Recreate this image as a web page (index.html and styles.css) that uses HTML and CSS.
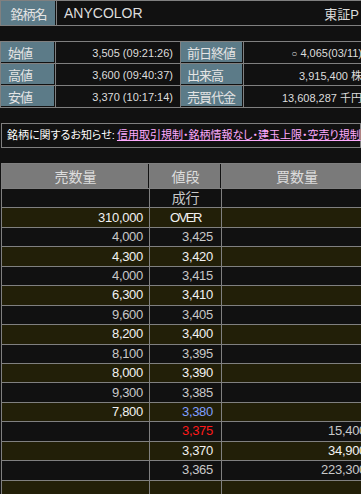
FILE: index.html
```html
<!DOCTYPE html>
<html lang="ja">
<head>
    <meta charset="UTF-8">
    <meta name="viewport" content="width=device-width, initial-scale=1.0">
    <title>ANYCOLOR 板情報</title>
    <link rel="stylesheet" href="styles.css">
</head>
<body>
    <!-- 銘柄名 -->
    <table class="name-box">
        <tr>
            <th>銘柄名</th>
            <td class="name">ANYCOLOR</td>
            <td class="market">東証P</td>
        </tr>
    </table>

    <!-- 四本値 -->
    <table class="info">
        <tr>
            <th class="label-l">始値</th>
            <td class="value-l">3,505 (09:21:26)</td>
            <th class="label-r">前日終値</th>
            <td class="value-r"><span class="mark">○</span> 4,065(03/11)</td>
        </tr>
        <tr>
            <th class="label-l">高値</th>
            <td class="value-l">3,600 (09:40:37)</td>
            <th class="label-r">出来高</th>
            <td class="value-r">3,915,400 株</td>
        </tr>
        <tr>
            <th class="label-l">安値</th>
            <td class="value-l">3,370 (10:17:14)</td>
            <th class="label-r">売買代金</th>
            <td class="value-r">13,608,287 千円</td>
        </tr>
    </table>

    <!-- お知らせ -->
    <div class="notice">銘柄に関するお知らせ:<a href="#">信用取引規制・銘柄情報なし・建玉上限・空売り規制</a></div>

    <!-- 板 -->
    <table class="board">
        <thead>
            <tr>
                <th class="col-sell">売数量</th>
                <th class="col-price">値段</th>
                <th class="col-buy">買数量</th>
            </tr>
        </thead>
        <tbody>
            <tr><td></td><td class="center">成行</td><td></td></tr>
            <tr class="alt"><td>310,000</td><td class="center over">OVER</td><td></td></tr>
            <tr><td>4,000</td><td>3,425</td><td></td></tr>
            <tr class="alt"><td>4,300</td><td>3,420</td><td></td></tr>
            <tr><td>4,000</td><td>3,415</td><td></td></tr>
            <tr class="alt"><td>6,300</td><td>3,410</td><td></td></tr>
            <tr><td>9,600</td><td>3,405</td><td></td></tr>
            <tr class="alt"><td>8,200</td><td>3,400</td><td></td></tr>
            <tr><td>8,100</td><td>3,395</td><td></td></tr>
            <tr class="alt"><td>8,000</td><td>3,390</td><td></td></tr>
            <tr><td>9,300</td><td>3,385</td><td></td></tr>
            <tr class="alt"><td>7,800</td><td class="best-ask">3,380</td><td></td></tr>
            <tr><td></td><td class="best-bid">3,375</td><td>15,400</td></tr>
            <tr class="alt"><td></td><td>3,370</td><td>34,900</td></tr>
            <tr><td></td><td>3,365</td><td>223,300</td></tr>
            <tr class="alt"><td></td><td></td><td></td></tr>
            <tr><td></td><td></td><td></td></tr>
        </tbody>
    </table>
</body>
</html>
```

FILE: styles.css
```css
html {
    overflow: hidden;
}

body {
    margin: 0;
    background: #111;
    color: #ddd;
    font-family: "Liberation Sans", "Noto Sans CJK JP", sans-serif;
}

table {
    border-collapse: collapse;
}

/* 銘柄名 */
.name-box {
    width: 372px;
    border: 1px solid #808080;
}

.name-box th {
    width: 55px;
    height: 24px;
    padding: 0;
    background: #5c7b88;
    color: #e4e4e4;
    font-size: 13px;
    font-weight: normal;
    letter-spacing: -1px;
    border-right: 1px solid #808080;
    box-shadow: inset -1px 0 0 #111;
}

.name-box .name {
    padding: 0 0 0 7px;
    font-size: 14px;
    color: #ddd;
}

.name-box .market {
    padding: 0 12px 0 0;
    text-align: right;
    font-size: 13px;
    color: #ddd;
}

/* 四本値 */
.info {
    margin-top: 15px;
    width: 373px;
    table-layout: fixed;
}

.info th,
.info td {
    height: 21px;
    padding: 0;
    border: 1px solid #808080;
    font-weight: normal;
}

.info th {
    background: #5c7b88;
    color: #e4e4e4;
    font-size: 13px;
    letter-spacing: -1px;
    text-align: left;
    padding-left: 7px;
    box-shadow: inset -1px -1px 0 #111;
}

.info .label-l {
    width: 47px;
}

.info .value-l {
    width: 117px;
}

.info .label-r {
    width: 56px;
    padding-left: 6px;
}

.info td {
    text-align: right;
    padding-right: 7px;
    font-size: 11px;
    color: #ddd;
}

.info td.value-r {
    padding-right: 10px;
}

.info .mark {
    font-size: 10px;
}

/* お知らせ */
.notice {
    box-sizing: border-box;
    width: 360px;
    height: 25px;
    margin: 15px 1px 0;
    padding: 0 0 0 5px;
    border: 1px solid #808080;
    font-size: 11px;
    line-height: 23px;
    color: #fff;
    white-space: nowrap;
    font-feature-settings: "palt";
}

.notice a {
    color: #ffaaff;
    margin-left: 2px;
}

/* 板 */
.board {
    margin: 15px 0 0 1px;
    width: 372px;
    table-layout: fixed;
}

.board th,
.board td {
    padding: 0;
    border: 1px solid #808080;
}

.board th {
    height: 24px;
    background: #7a7a7a;
    color: #ddd;
    font-size: 14px;
    font-weight: normal;
    box-shadow: inset -1px 0 0 #111;
}

.board .col-sell {
    width: 147px;
}

.board .col-price {
    width: 71px;
}

.board td {
    height: 18.45px;
    text-align: right;
    padding-right: 6px;
    font-size: 13px;
    letter-spacing: -0.3px;
    color: #c8c8c8;
    background: #111;
    line-height: 16px;
}

.board td:nth-child(2) {
    padding-right: 8px;
}

.board tr.alt td {
    background: #221f08;
    color: #f2f2f2;
}

.board td.center {
    text-align: center;
    padding-right: 0;
    font-size: 14px;
}

.board td.over {
    font-size: 13px;
    letter-spacing: -1.5px;
}

.board td.best-ask,
.board tr.alt td.best-ask {
    color: #809fff;
}

.board td.best-bid {
    color: #ff1a1a;
}
```
